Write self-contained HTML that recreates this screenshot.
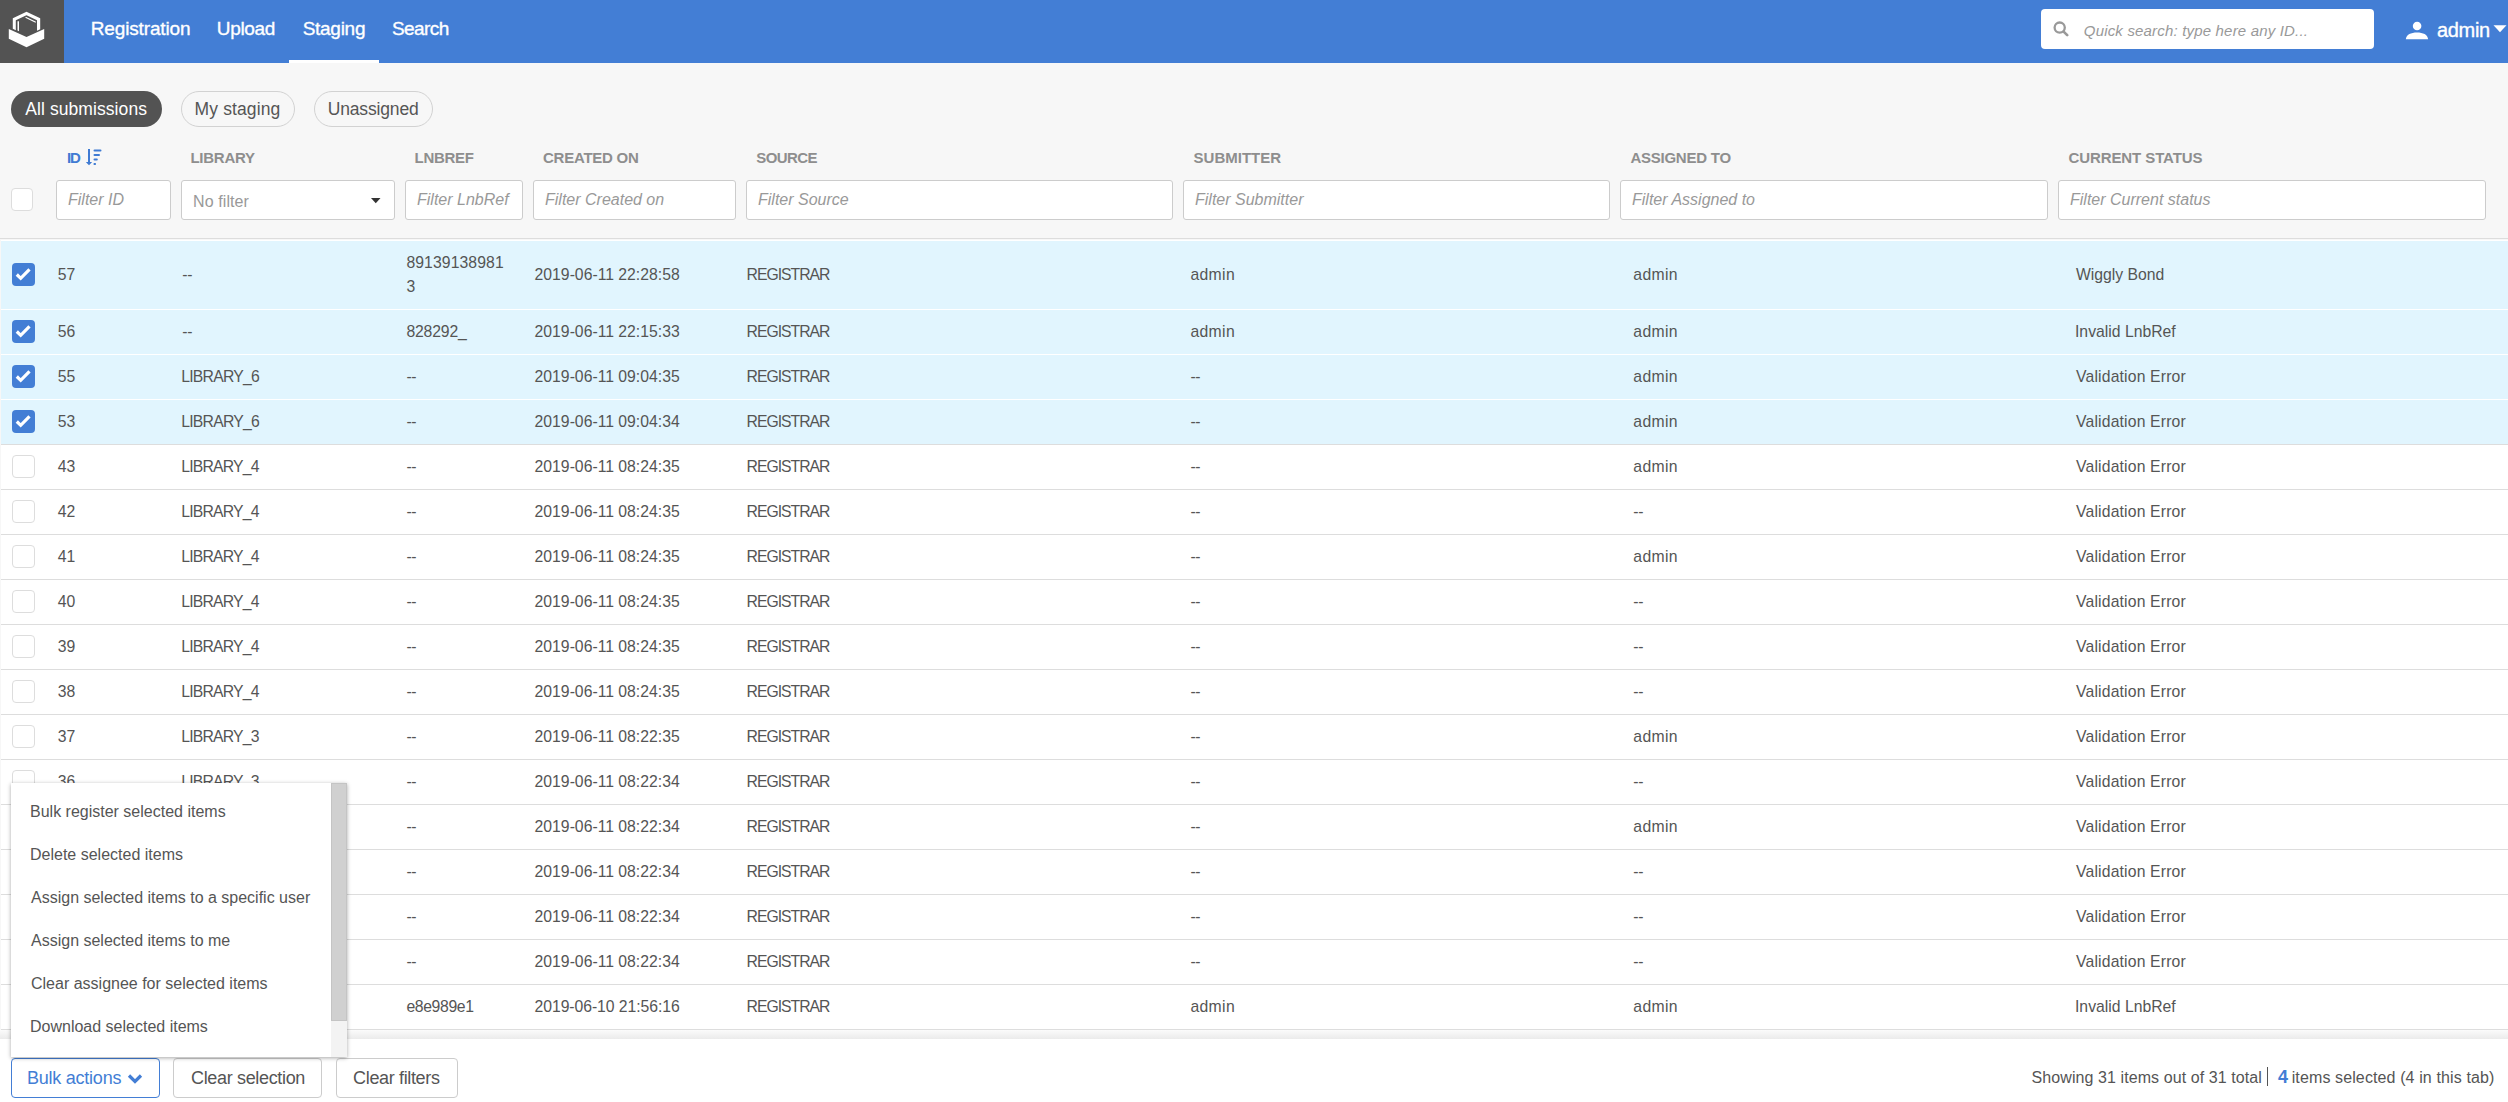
<!DOCTYPE html><html><head><meta charset="utf-8"><style>
*{box-sizing:border-box;margin:0;padding:0}
html,body{width:2508px;height:1102px;overflow:hidden;background:#f7f7f7;font-family:"Liberation Sans", sans-serif}
.t{position:absolute;white-space:nowrap}
.a{position:absolute}
</style></head><body>
<div class="a" style="left:0;top:0;width:2508px;height:63px;background:#437ed5"></div>
<div class="a" style="left:0;top:0;width:64px;height:63px;background:#535353"></div>
<svg class="a" style="left:0;top:0" width="64" height="63" viewBox="0 0 64 63">
<path d="M26.5 11.8 L40.2 18.3 L40.2 29.2 L37 30.8 L37 20.2 L26.5 15.2 L15.8 20.2 L15.8 30.2 L12.8 28.8 L12.8 18.3 Z" fill="#fff"/>
<path d="M8.8 29 L26.5 37 L44.2 29 L44.2 38.8 L26.5 47.2 L8.8 38.8 Z" fill="#fff"/>
<path d="M17.5 21.2 L19 21.2 L19 31.2 L17.5 30.5 Z" fill="#fff"/>
<path d="M25.8 16.8 L36 21.8 L35.5 22.8 L25.3 17.8 Z" fill="#fff"/>
</svg>
<div class="t" style="left:90.80px;top:19.02px;font-size:19px;line-height:19px;color:#fff;letter-spacing:-0.156px;-webkit-text-stroke:0.35px #fff;">Registration</div>
<div class="t" style="left:216.80px;top:19.02px;font-size:19px;line-height:19px;color:#fff;letter-spacing:-0.329px;-webkit-text-stroke:0.35px #fff;">Upload</div>
<div class="t" style="left:302.70px;top:19.02px;font-size:19px;line-height:19px;color:#fff;letter-spacing:-0.279px;-webkit-text-stroke:0.35px #fff;">Staging</div>
<div class="t" style="left:392.00px;top:19.02px;font-size:19px;line-height:19px;color:#fff;letter-spacing:-0.587px;-webkit-text-stroke:0.35px #fff;">Search</div>
<div class="a" style="left:289px;top:60px;width:90px;height:3px;background:#fff"></div>
<div class="a" style="left:2041px;top:9px;width:333px;height:40px;background:#fff;border-radius:4px"></div>
<svg class="a" style="left:2053px;top:21px" width="16" height="16" viewBox="0 0 16 16">
<circle cx="6.7" cy="6.6" r="5.1" fill="none" stroke="#999" stroke-width="2.3"/>
<path d="M10.6 10.6 L14.2 14.2" stroke="#999" stroke-width="2.6" stroke-linecap="round"/>
</svg>
<div class="t" style="left:2083.80px;top:23.10px;font-size:15px;line-height:15px;color:#999;letter-spacing:0.179px;font-style:italic">Quick search: type here any ID...</div>
<svg class="a" style="left:2405px;top:21px" width="24" height="20" viewBox="0 0 24 20">
<circle cx="12.1" cy="5" r="4.3" fill="#fff"/>
<path d="M0.8 18.3 C1.2 13.5 6 11.5 12 11.5 C18 11.5 22.7 13.5 23.1 18.3 Z" fill="#fff"/>
</svg>
<div class="t" style="left:2437.00px;top:19.57px;font-size:20px;line-height:20px;color:#fff;letter-spacing:-0.337px;-webkit-text-stroke:0.35px #fff;">admin</div>
<svg class="a" style="left:2492.5px;top:25px" width="14" height="8" viewBox="0 0 14 8"><path d="M0.5 0.3 L13.5 0.3 L7 7.2 Z" fill="#fff"/></svg>
<div class="a" style="left:11px;top:91px;width:151px;height:36px;border-radius:18px;background:#535353"></div>
<div class="t" style="left:25.30px;top:101.19px;font-size:17.5px;line-height:17.5px;color:#fff;letter-spacing:0.075px;">All submissions</div>
<div class="a" style="left:181px;top:91px;width:114px;height:36px;border-radius:18px;border:1px solid #d2d2d2"></div>
<div class="t" style="left:194.60px;top:101.19px;font-size:17.5px;line-height:17.5px;color:#555;letter-spacing:0.124px;">My staging</div>
<div class="a" style="left:314px;top:91px;width:119px;height:36px;border-radius:18px;border:1px solid #d2d2d2"></div>
<div class="t" style="left:327.70px;top:101.19px;font-size:17.5px;line-height:17.5px;color:#555;letter-spacing:-0.154px;">Unassigned</div>
<div class="t" style="left:66.90px;top:150.10px;font-size:15px;line-height:15px;color:#3f7bd3;letter-spacing:-1.167px;font-weight:bold">ID</div>
<div class="t" style="left:190.40px;top:150.10px;font-size:15px;line-height:15px;color:#8e8e8e;letter-spacing:-0.251px;font-weight:bold">LIBRARY</div>
<div class="t" style="left:414.60px;top:150.10px;font-size:15px;line-height:15px;color:#8e8e8e;letter-spacing:-0.313px;font-weight:bold">LNBREF</div>
<div class="t" style="left:543.00px;top:150.10px;font-size:15px;line-height:15px;color:#8e8e8e;letter-spacing:-0.247px;font-weight:bold">CREATED ON</div>
<div class="t" style="left:756.20px;top:150.10px;font-size:15px;line-height:15px;color:#8e8e8e;letter-spacing:-0.554px;font-weight:bold">SOURCE</div>
<div class="t" style="left:1193.60px;top:150.10px;font-size:15px;line-height:15px;color:#8e8e8e;letter-spacing:0.005px;font-weight:bold">SUBMITTER</div>
<div class="t" style="left:1630.40px;top:150.10px;font-size:15px;line-height:15px;color:#8e8e8e;letter-spacing:-0.241px;font-weight:bold">ASSIGNED TO</div>
<div class="t" style="left:2068.50px;top:150.10px;font-size:15px;line-height:15px;color:#8e8e8e;letter-spacing:-0.097px;font-weight:bold">CURRENT STATUS</div>
<svg class="a" style="left:84px;top:148px" width="20" height="18" viewBox="84 148 20 18">
<rect x="88" y="149" width="2" height="13.5" fill="#3f7bd3"/>
<path d="M85.8 162 L92.2 162 L89 165.2 Z" fill="#3f7bd3"/>
<rect x="93.5" y="149.5" width="8" height="2.1" rx="1" fill="#3f7bd3"/>
<rect x="93.5" y="154" width="6.5" height="2.1" rx="1" fill="#3f7bd3"/>
<rect x="93.5" y="158.5" width="4.3" height="2.1" rx="1" fill="#3f7bd3"/>
<rect x="93.5" y="163" width="2.5" height="2.1" rx="0.8" fill="#3f7bd3"/>
</svg>
<div class="a" style="left:11px;top:188px;width:22px;height:23px;border:1px solid #ddd;border-radius:4px;background:#fff"></div>
<div class="a" style="left:56px;top:180px;width:115px;height:40px;border:1px solid #ccc;border-radius:3px;background:#fff;overflow:hidden"><div class="t" style="left:11px;top:10.96px;font-size:16px;line-height:16px;color:#999;font-style:italic">Filter ID</div></div>
<div class="a" style="left:181px;top:180px;width:214px;height:40px;border:1px solid #ccc;border-radius:3px;background:#fff;overflow:hidden"><div class="t" style="left:11px;letter-spacing:0.1px;top:12.66px;font-size:16px;line-height:16px;color:#999">No filter</div><svg class="a" style="left:189px;top:17px" width="10" height="6" viewBox="0 0 10 6"><path d="M0 0 L9.5 0 L4.75 5.2 Z" fill="#333"/></svg></div>
<div class="a" style="left:405px;top:180px;width:117.5px;height:40px;border:1px solid #ccc;border-radius:3px;background:#fff;overflow:hidden"><div class="t" style="left:11px;top:10.96px;font-size:16px;line-height:16px;color:#999;font-style:italic">Filter LnbRef</div></div>
<div class="a" style="left:533px;top:180px;width:203px;height:40px;border:1px solid #ccc;border-radius:3px;background:#fff;overflow:hidden"><div class="t" style="left:11px;top:10.96px;font-size:16px;line-height:16px;color:#999;font-style:italic">Filter Created on</div></div>
<div class="a" style="left:746px;top:180px;width:427px;height:40px;border:1px solid #ccc;border-radius:3px;background:#fff;overflow:hidden"><div class="t" style="left:11px;top:10.96px;font-size:16px;line-height:16px;color:#999;font-style:italic">Filter Source</div></div>
<div class="a" style="left:1183px;top:180px;width:427px;height:40px;border:1px solid #ccc;border-radius:3px;background:#fff;overflow:hidden"><div class="t" style="left:11px;top:10.96px;font-size:16px;line-height:16px;color:#999;font-style:italic">Filter Submitter</div></div>
<div class="a" style="left:1620px;top:180px;width:428px;height:40px;border:1px solid #ccc;border-radius:3px;background:#fff;overflow:hidden"><div class="t" style="left:11px;top:10.96px;font-size:16px;line-height:16px;color:#999;font-style:italic">Filter Assigned to</div></div>
<div class="a" style="left:2058px;top:180px;width:428px;height:40px;border:1px solid #ccc;border-radius:3px;background:#fff;overflow:hidden"><div class="t" style="left:11px;top:10.96px;font-size:16px;line-height:16px;color:#999;font-style:italic">Filter Current status</div></div>
<div class="a" style="left:0;top:238px;width:2508px;height:1px;background:#ddd"></div>
<div class="a" style="left:1px;top:240px;width:2507px;height:790px;background:#fff"></div>
<div class="a" style="left:1px;top:240px;width:2507px;height:69px;border-top:1px solid #fff;background:#e1f5fe"></div>
<div class="a" style="left:12px;top:263px;width:23px;height:23px;border-radius:4px;background:#437ed5"></div><svg class="a" style="left:12px;top:263px" width="23" height="23" viewBox="0 0 23 23"><path d="M4.8 11.5 L8.7 15.3 L17.5 6.3" fill="none" stroke="#fff" stroke-width="3.2"/></svg>
<div class="t" style="left:57.80px;top:267.27px;font-size:15.75px;line-height:15.75px;color:#555;">57</div>
<div class="t" style="left:182.30px;top:267.27px;font-size:15.75px;line-height:15.75px;color:#555;letter-spacing:-0.3px;">--</div>
<div class="t" style="left:406.40px;top:255.27px;font-size:15.75px;line-height:15.75px;color:#555;letter-spacing:0.091px;">89139138981</div>
<div class="t" style="left:406.40px;top:279.27px;font-size:15.75px;line-height:15.75px;color:#555;">3</div>
<div class="t" style="left:534.60px;top:267.27px;font-size:15.75px;line-height:15.75px;color:#555;letter-spacing:-0.001px;">2019-06-11 22:28:58</div>
<div class="t" style="left:746.60px;top:267.27px;font-size:15.75px;line-height:15.75px;color:#555;letter-spacing:-1.014px;">REGISTRAR</div>
<div class="t" style="left:1190.40px;top:267.27px;font-size:15.75px;line-height:15.75px;color:#555;letter-spacing:0.341px;">admin</div>
<div class="t" style="left:1633.30px;top:267.27px;font-size:15.75px;line-height:15.75px;color:#555;letter-spacing:0.341px;">admin</div>
<div class="t" style="left:2076.00px;top:267.27px;font-size:15.75px;line-height:15.75px;color:#555;letter-spacing:-0.026px;">Wiggly Bond</div>
<div class="a" style="left:1px;top:309px;width:2507px;height:45px;border-top:1px solid #fff;background:#e1f5fe"></div>
<div class="a" style="left:12px;top:320px;width:23px;height:23px;border-radius:4px;background:#437ed5"></div><svg class="a" style="left:12px;top:320px" width="23" height="23" viewBox="0 0 23 23"><path d="M4.8 11.5 L8.7 15.3 L17.5 6.3" fill="none" stroke="#fff" stroke-width="3.2"/></svg>
<div class="t" style="left:57.80px;top:324.27px;font-size:15.75px;line-height:15.75px;color:#555;">56</div>
<div class="t" style="left:182.30px;top:324.27px;font-size:15.75px;line-height:15.75px;color:#555;letter-spacing:-0.3px;">--</div>
<div class="t" style="left:406.40px;top:324.27px;font-size:15.75px;line-height:15.75px;color:#555;letter-spacing:-0.159px;">828292_</div>
<div class="t" style="left:534.60px;top:324.27px;font-size:15.75px;line-height:15.75px;color:#555;letter-spacing:-0.001px;">2019-06-11 22:15:33</div>
<div class="t" style="left:746.60px;top:324.27px;font-size:15.75px;line-height:15.75px;color:#555;letter-spacing:-1.014px;">REGISTRAR</div>
<div class="t" style="left:1190.40px;top:324.27px;font-size:15.75px;line-height:15.75px;color:#555;letter-spacing:0.341px;">admin</div>
<div class="t" style="left:1633.30px;top:324.27px;font-size:15.75px;line-height:15.75px;color:#555;letter-spacing:0.341px;">admin</div>
<div class="t" style="left:2075.00px;top:324.27px;font-size:15.75px;line-height:15.75px;color:#555;letter-spacing:-0.001px;">Invalid LnbRef</div>
<div class="a" style="left:1px;top:354px;width:2507px;height:45px;border-top:1px solid #fff;background:#e1f5fe"></div>
<div class="a" style="left:12px;top:365px;width:23px;height:23px;border-radius:4px;background:#437ed5"></div><svg class="a" style="left:12px;top:365px" width="23" height="23" viewBox="0 0 23 23"><path d="M4.8 11.5 L8.7 15.3 L17.5 6.3" fill="none" stroke="#fff" stroke-width="3.2"/></svg>
<div class="t" style="left:57.80px;top:369.27px;font-size:15.75px;line-height:15.75px;color:#555;">55</div>
<div class="t" style="left:181.30px;top:369.27px;font-size:15.75px;line-height:15.75px;color:#555;letter-spacing:-0.784px;">LIBRARY_6</div>
<div class="t" style="left:406.40px;top:369.27px;font-size:15.75px;line-height:15.75px;color:#555;letter-spacing:-0.3px;">--</div>
<div class="t" style="left:534.60px;top:369.27px;font-size:15.75px;line-height:15.75px;color:#555;letter-spacing:-0.001px;">2019-06-11 09:04:35</div>
<div class="t" style="left:746.60px;top:369.27px;font-size:15.75px;line-height:15.75px;color:#555;letter-spacing:-1.014px;">REGISTRAR</div>
<div class="t" style="left:1190.40px;top:369.27px;font-size:15.75px;line-height:15.75px;color:#555;letter-spacing:-0.3px;">--</div>
<div class="t" style="left:1633.30px;top:369.27px;font-size:15.75px;line-height:15.75px;color:#555;letter-spacing:0.341px;">admin</div>
<div class="t" style="left:2076.00px;top:369.27px;font-size:15.75px;line-height:15.75px;color:#555;letter-spacing:0.158px;">Validation Error</div>
<div class="a" style="left:1px;top:399px;width:2507px;height:45px;border-top:1px solid #fff;background:#e1f5fe"></div>
<div class="a" style="left:12px;top:410px;width:23px;height:23px;border-radius:4px;background:#437ed5"></div><svg class="a" style="left:12px;top:410px" width="23" height="23" viewBox="0 0 23 23"><path d="M4.8 11.5 L8.7 15.3 L17.5 6.3" fill="none" stroke="#fff" stroke-width="3.2"/></svg>
<div class="t" style="left:57.80px;top:414.27px;font-size:15.75px;line-height:15.75px;color:#555;">53</div>
<div class="t" style="left:181.30px;top:414.27px;font-size:15.75px;line-height:15.75px;color:#555;letter-spacing:-0.784px;">LIBRARY_6</div>
<div class="t" style="left:406.40px;top:414.27px;font-size:15.75px;line-height:15.75px;color:#555;letter-spacing:-0.3px;">--</div>
<div class="t" style="left:534.60px;top:414.27px;font-size:15.75px;line-height:15.75px;color:#555;letter-spacing:-0.001px;">2019-06-11 09:04:34</div>
<div class="t" style="left:746.60px;top:414.27px;font-size:15.75px;line-height:15.75px;color:#555;letter-spacing:-1.014px;">REGISTRAR</div>
<div class="t" style="left:1190.40px;top:414.27px;font-size:15.75px;line-height:15.75px;color:#555;letter-spacing:-0.3px;">--</div>
<div class="t" style="left:1633.30px;top:414.27px;font-size:15.75px;line-height:15.75px;color:#555;letter-spacing:0.341px;">admin</div>
<div class="t" style="left:2076.00px;top:414.27px;font-size:15.75px;line-height:15.75px;color:#555;letter-spacing:0.158px;">Validation Error</div>
<div class="a" style="left:1px;top:444px;width:2507px;height:45px;border-top:1px solid #ddd;background:#fff"></div>
<div class="a" style="left:12px;top:455px;width:23px;height:23px;border-radius:4px;border:1px solid #ddd;background:#fff"></div>
<div class="t" style="left:57.80px;top:459.27px;font-size:15.75px;line-height:15.75px;color:#555;">43</div>
<div class="t" style="left:181.30px;top:459.27px;font-size:15.75px;line-height:15.75px;color:#555;letter-spacing:-0.809px;">LIBRARY_4</div>
<div class="t" style="left:406.40px;top:459.27px;font-size:15.75px;line-height:15.75px;color:#555;letter-spacing:-0.3px;">--</div>
<div class="t" style="left:534.60px;top:459.27px;font-size:15.75px;line-height:15.75px;color:#555;letter-spacing:-0.001px;">2019-06-11 08:24:35</div>
<div class="t" style="left:746.60px;top:459.27px;font-size:15.75px;line-height:15.75px;color:#555;letter-spacing:-1.014px;">REGISTRAR</div>
<div class="t" style="left:1190.40px;top:459.27px;font-size:15.75px;line-height:15.75px;color:#555;letter-spacing:-0.3px;">--</div>
<div class="t" style="left:1633.30px;top:459.27px;font-size:15.75px;line-height:15.75px;color:#555;letter-spacing:0.341px;">admin</div>
<div class="t" style="left:2076.00px;top:459.27px;font-size:15.75px;line-height:15.75px;color:#555;letter-spacing:0.158px;">Validation Error</div>
<div class="a" style="left:1px;top:489px;width:2507px;height:45px;border-top:1px solid #ddd;background:#fff"></div>
<div class="a" style="left:12px;top:500px;width:23px;height:23px;border-radius:4px;border:1px solid #ddd;background:#fff"></div>
<div class="t" style="left:57.80px;top:504.27px;font-size:15.75px;line-height:15.75px;color:#555;">42</div>
<div class="t" style="left:181.30px;top:504.27px;font-size:15.75px;line-height:15.75px;color:#555;letter-spacing:-0.809px;">LIBRARY_4</div>
<div class="t" style="left:406.40px;top:504.27px;font-size:15.75px;line-height:15.75px;color:#555;letter-spacing:-0.3px;">--</div>
<div class="t" style="left:534.60px;top:504.27px;font-size:15.75px;line-height:15.75px;color:#555;letter-spacing:-0.001px;">2019-06-11 08:24:35</div>
<div class="t" style="left:746.60px;top:504.27px;font-size:15.75px;line-height:15.75px;color:#555;letter-spacing:-1.014px;">REGISTRAR</div>
<div class="t" style="left:1190.40px;top:504.27px;font-size:15.75px;line-height:15.75px;color:#555;letter-spacing:-0.3px;">--</div>
<div class="t" style="left:1633.30px;top:504.27px;font-size:15.75px;line-height:15.75px;color:#555;letter-spacing:-0.3px;">--</div>
<div class="t" style="left:2076.00px;top:504.27px;font-size:15.75px;line-height:15.75px;color:#555;letter-spacing:0.158px;">Validation Error</div>
<div class="a" style="left:1px;top:534px;width:2507px;height:45px;border-top:1px solid #ddd;background:#fff"></div>
<div class="a" style="left:12px;top:545px;width:23px;height:23px;border-radius:4px;border:1px solid #ddd;background:#fff"></div>
<div class="t" style="left:57.80px;top:549.27px;font-size:15.75px;line-height:15.75px;color:#555;">41</div>
<div class="t" style="left:181.30px;top:549.27px;font-size:15.75px;line-height:15.75px;color:#555;letter-spacing:-0.809px;">LIBRARY_4</div>
<div class="t" style="left:406.40px;top:549.27px;font-size:15.75px;line-height:15.75px;color:#555;letter-spacing:-0.3px;">--</div>
<div class="t" style="left:534.60px;top:549.27px;font-size:15.75px;line-height:15.75px;color:#555;letter-spacing:-0.001px;">2019-06-11 08:24:35</div>
<div class="t" style="left:746.60px;top:549.27px;font-size:15.75px;line-height:15.75px;color:#555;letter-spacing:-1.014px;">REGISTRAR</div>
<div class="t" style="left:1190.40px;top:549.27px;font-size:15.75px;line-height:15.75px;color:#555;letter-spacing:-0.3px;">--</div>
<div class="t" style="left:1633.30px;top:549.27px;font-size:15.75px;line-height:15.75px;color:#555;letter-spacing:0.341px;">admin</div>
<div class="t" style="left:2076.00px;top:549.27px;font-size:15.75px;line-height:15.75px;color:#555;letter-spacing:0.158px;">Validation Error</div>
<div class="a" style="left:1px;top:579px;width:2507px;height:45px;border-top:1px solid #ddd;background:#fff"></div>
<div class="a" style="left:12px;top:590px;width:23px;height:23px;border-radius:4px;border:1px solid #ddd;background:#fff"></div>
<div class="t" style="left:57.80px;top:594.27px;font-size:15.75px;line-height:15.75px;color:#555;">40</div>
<div class="t" style="left:181.30px;top:594.27px;font-size:15.75px;line-height:15.75px;color:#555;letter-spacing:-0.809px;">LIBRARY_4</div>
<div class="t" style="left:406.40px;top:594.27px;font-size:15.75px;line-height:15.75px;color:#555;letter-spacing:-0.3px;">--</div>
<div class="t" style="left:534.60px;top:594.27px;font-size:15.75px;line-height:15.75px;color:#555;letter-spacing:-0.001px;">2019-06-11 08:24:35</div>
<div class="t" style="left:746.60px;top:594.27px;font-size:15.75px;line-height:15.75px;color:#555;letter-spacing:-1.014px;">REGISTRAR</div>
<div class="t" style="left:1190.40px;top:594.27px;font-size:15.75px;line-height:15.75px;color:#555;letter-spacing:-0.3px;">--</div>
<div class="t" style="left:1633.30px;top:594.27px;font-size:15.75px;line-height:15.75px;color:#555;letter-spacing:-0.3px;">--</div>
<div class="t" style="left:2076.00px;top:594.27px;font-size:15.75px;line-height:15.75px;color:#555;letter-spacing:0.158px;">Validation Error</div>
<div class="a" style="left:1px;top:624px;width:2507px;height:45px;border-top:1px solid #ddd;background:#fff"></div>
<div class="a" style="left:12px;top:635px;width:23px;height:23px;border-radius:4px;border:1px solid #ddd;background:#fff"></div>
<div class="t" style="left:57.80px;top:639.27px;font-size:15.75px;line-height:15.75px;color:#555;">39</div>
<div class="t" style="left:181.30px;top:639.27px;font-size:15.75px;line-height:15.75px;color:#555;letter-spacing:-0.809px;">LIBRARY_4</div>
<div class="t" style="left:406.40px;top:639.27px;font-size:15.75px;line-height:15.75px;color:#555;letter-spacing:-0.3px;">--</div>
<div class="t" style="left:534.60px;top:639.27px;font-size:15.75px;line-height:15.75px;color:#555;letter-spacing:-0.001px;">2019-06-11 08:24:35</div>
<div class="t" style="left:746.60px;top:639.27px;font-size:15.75px;line-height:15.75px;color:#555;letter-spacing:-1.014px;">REGISTRAR</div>
<div class="t" style="left:1190.40px;top:639.27px;font-size:15.75px;line-height:15.75px;color:#555;letter-spacing:-0.3px;">--</div>
<div class="t" style="left:1633.30px;top:639.27px;font-size:15.75px;line-height:15.75px;color:#555;letter-spacing:-0.3px;">--</div>
<div class="t" style="left:2076.00px;top:639.27px;font-size:15.75px;line-height:15.75px;color:#555;letter-spacing:0.158px;">Validation Error</div>
<div class="a" style="left:1px;top:669px;width:2507px;height:45px;border-top:1px solid #ddd;background:#fff"></div>
<div class="a" style="left:12px;top:680px;width:23px;height:23px;border-radius:4px;border:1px solid #ddd;background:#fff"></div>
<div class="t" style="left:57.80px;top:684.27px;font-size:15.75px;line-height:15.75px;color:#555;">38</div>
<div class="t" style="left:181.30px;top:684.27px;font-size:15.75px;line-height:15.75px;color:#555;letter-spacing:-0.809px;">LIBRARY_4</div>
<div class="t" style="left:406.40px;top:684.27px;font-size:15.75px;line-height:15.75px;color:#555;letter-spacing:-0.3px;">--</div>
<div class="t" style="left:534.60px;top:684.27px;font-size:15.75px;line-height:15.75px;color:#555;letter-spacing:-0.001px;">2019-06-11 08:24:35</div>
<div class="t" style="left:746.60px;top:684.27px;font-size:15.75px;line-height:15.75px;color:#555;letter-spacing:-1.014px;">REGISTRAR</div>
<div class="t" style="left:1190.40px;top:684.27px;font-size:15.75px;line-height:15.75px;color:#555;letter-spacing:-0.3px;">--</div>
<div class="t" style="left:1633.30px;top:684.27px;font-size:15.75px;line-height:15.75px;color:#555;letter-spacing:-0.3px;">--</div>
<div class="t" style="left:2076.00px;top:684.27px;font-size:15.75px;line-height:15.75px;color:#555;letter-spacing:0.158px;">Validation Error</div>
<div class="a" style="left:1px;top:714px;width:2507px;height:45px;border-top:1px solid #ddd;background:#fff"></div>
<div class="a" style="left:12px;top:725px;width:23px;height:23px;border-radius:4px;border:1px solid #ddd;background:#fff"></div>
<div class="t" style="left:57.80px;top:729.27px;font-size:15.75px;line-height:15.75px;color:#555;">37</div>
<div class="t" style="left:181.30px;top:729.27px;font-size:15.75px;line-height:15.75px;color:#555;letter-spacing:-0.809px;">LIBRARY_3</div>
<div class="t" style="left:406.40px;top:729.27px;font-size:15.75px;line-height:15.75px;color:#555;letter-spacing:-0.3px;">--</div>
<div class="t" style="left:534.60px;top:729.27px;font-size:15.75px;line-height:15.75px;color:#555;letter-spacing:-0.001px;">2019-06-11 08:22:35</div>
<div class="t" style="left:746.60px;top:729.27px;font-size:15.75px;line-height:15.75px;color:#555;letter-spacing:-1.014px;">REGISTRAR</div>
<div class="t" style="left:1190.40px;top:729.27px;font-size:15.75px;line-height:15.75px;color:#555;letter-spacing:-0.3px;">--</div>
<div class="t" style="left:1633.30px;top:729.27px;font-size:15.75px;line-height:15.75px;color:#555;letter-spacing:0.341px;">admin</div>
<div class="t" style="left:2076.00px;top:729.27px;font-size:15.75px;line-height:15.75px;color:#555;letter-spacing:0.158px;">Validation Error</div>
<div class="a" style="left:1px;top:759px;width:2507px;height:45px;border-top:1px solid #ddd;background:#fff"></div>
<div class="a" style="left:12px;top:770px;width:23px;height:23px;border-radius:4px;border:1px solid #ddd;background:#fff"></div>
<div class="t" style="left:57.80px;top:774.27px;font-size:15.75px;line-height:15.75px;color:#555;">36</div>
<div class="t" style="left:181.30px;top:774.27px;font-size:15.75px;line-height:15.75px;color:#555;letter-spacing:-0.809px;">LIBRARY_3</div>
<div class="t" style="left:406.40px;top:774.27px;font-size:15.75px;line-height:15.75px;color:#555;letter-spacing:-0.3px;">--</div>
<div class="t" style="left:534.60px;top:774.27px;font-size:15.75px;line-height:15.75px;color:#555;letter-spacing:-0.001px;">2019-06-11 08:22:34</div>
<div class="t" style="left:746.60px;top:774.27px;font-size:15.75px;line-height:15.75px;color:#555;letter-spacing:-1.014px;">REGISTRAR</div>
<div class="t" style="left:1190.40px;top:774.27px;font-size:15.75px;line-height:15.75px;color:#555;letter-spacing:-0.3px;">--</div>
<div class="t" style="left:1633.30px;top:774.27px;font-size:15.75px;line-height:15.75px;color:#555;letter-spacing:-0.3px;">--</div>
<div class="t" style="left:2076.00px;top:774.27px;font-size:15.75px;line-height:15.75px;color:#555;letter-spacing:0.158px;">Validation Error</div>
<div class="a" style="left:1px;top:804px;width:2507px;height:45px;border-top:1px solid #ddd;background:#fff"></div>
<div class="a" style="left:12px;top:815px;width:23px;height:23px;border-radius:4px;border:1px solid #ddd;background:#fff"></div>
<div class="t" style="left:57.80px;top:819.27px;font-size:15.75px;line-height:15.75px;color:#555;">35</div>
<div class="t" style="left:181.30px;top:819.27px;font-size:15.75px;line-height:15.75px;color:#555;letter-spacing:-0.809px;">LIBRARY_3</div>
<div class="t" style="left:406.40px;top:819.27px;font-size:15.75px;line-height:15.75px;color:#555;letter-spacing:-0.3px;">--</div>
<div class="t" style="left:534.60px;top:819.27px;font-size:15.75px;line-height:15.75px;color:#555;letter-spacing:-0.001px;">2019-06-11 08:22:34</div>
<div class="t" style="left:746.60px;top:819.27px;font-size:15.75px;line-height:15.75px;color:#555;letter-spacing:-1.014px;">REGISTRAR</div>
<div class="t" style="left:1190.40px;top:819.27px;font-size:15.75px;line-height:15.75px;color:#555;letter-spacing:-0.3px;">--</div>
<div class="t" style="left:1633.30px;top:819.27px;font-size:15.75px;line-height:15.75px;color:#555;letter-spacing:0.341px;">admin</div>
<div class="t" style="left:2076.00px;top:819.27px;font-size:15.75px;line-height:15.75px;color:#555;letter-spacing:0.158px;">Validation Error</div>
<div class="a" style="left:1px;top:849px;width:2507px;height:45px;border-top:1px solid #ddd;background:#fff"></div>
<div class="a" style="left:12px;top:860px;width:23px;height:23px;border-radius:4px;border:1px solid #ddd;background:#fff"></div>
<div class="t" style="left:57.80px;top:864.27px;font-size:15.75px;line-height:15.75px;color:#555;">34</div>
<div class="t" style="left:181.30px;top:864.27px;font-size:15.75px;line-height:15.75px;color:#555;letter-spacing:-0.809px;">LIBRARY_3</div>
<div class="t" style="left:406.40px;top:864.27px;font-size:15.75px;line-height:15.75px;color:#555;letter-spacing:-0.3px;">--</div>
<div class="t" style="left:534.60px;top:864.27px;font-size:15.75px;line-height:15.75px;color:#555;letter-spacing:-0.001px;">2019-06-11 08:22:34</div>
<div class="t" style="left:746.60px;top:864.27px;font-size:15.75px;line-height:15.75px;color:#555;letter-spacing:-1.014px;">REGISTRAR</div>
<div class="t" style="left:1190.40px;top:864.27px;font-size:15.75px;line-height:15.75px;color:#555;letter-spacing:-0.3px;">--</div>
<div class="t" style="left:1633.30px;top:864.27px;font-size:15.75px;line-height:15.75px;color:#555;letter-spacing:-0.3px;">--</div>
<div class="t" style="left:2076.00px;top:864.27px;font-size:15.75px;line-height:15.75px;color:#555;letter-spacing:0.158px;">Validation Error</div>
<div class="a" style="left:1px;top:894px;width:2507px;height:45px;border-top:1px solid #ddd;background:#fff"></div>
<div class="a" style="left:12px;top:905px;width:23px;height:23px;border-radius:4px;border:1px solid #ddd;background:#fff"></div>
<div class="t" style="left:57.80px;top:909.27px;font-size:15.75px;line-height:15.75px;color:#555;">33</div>
<div class="t" style="left:181.30px;top:909.27px;font-size:15.75px;line-height:15.75px;color:#555;letter-spacing:-0.809px;">LIBRARY_3</div>
<div class="t" style="left:406.40px;top:909.27px;font-size:15.75px;line-height:15.75px;color:#555;letter-spacing:-0.3px;">--</div>
<div class="t" style="left:534.60px;top:909.27px;font-size:15.75px;line-height:15.75px;color:#555;letter-spacing:-0.001px;">2019-06-11 08:22:34</div>
<div class="t" style="left:746.60px;top:909.27px;font-size:15.75px;line-height:15.75px;color:#555;letter-spacing:-1.014px;">REGISTRAR</div>
<div class="t" style="left:1190.40px;top:909.27px;font-size:15.75px;line-height:15.75px;color:#555;letter-spacing:-0.3px;">--</div>
<div class="t" style="left:1633.30px;top:909.27px;font-size:15.75px;line-height:15.75px;color:#555;letter-spacing:-0.3px;">--</div>
<div class="t" style="left:2076.00px;top:909.27px;font-size:15.75px;line-height:15.75px;color:#555;letter-spacing:0.158px;">Validation Error</div>
<div class="a" style="left:1px;top:939px;width:2507px;height:45px;border-top:1px solid #ddd;background:#fff"></div>
<div class="a" style="left:12px;top:950px;width:23px;height:23px;border-radius:4px;border:1px solid #ddd;background:#fff"></div>
<div class="t" style="left:57.80px;top:954.27px;font-size:15.75px;line-height:15.75px;color:#555;">32</div>
<div class="t" style="left:181.30px;top:954.27px;font-size:15.75px;line-height:15.75px;color:#555;letter-spacing:-0.809px;">LIBRARY_3</div>
<div class="t" style="left:406.40px;top:954.27px;font-size:15.75px;line-height:15.75px;color:#555;letter-spacing:-0.3px;">--</div>
<div class="t" style="left:534.60px;top:954.27px;font-size:15.75px;line-height:15.75px;color:#555;letter-spacing:-0.001px;">2019-06-11 08:22:34</div>
<div class="t" style="left:746.60px;top:954.27px;font-size:15.75px;line-height:15.75px;color:#555;letter-spacing:-1.014px;">REGISTRAR</div>
<div class="t" style="left:1190.40px;top:954.27px;font-size:15.75px;line-height:15.75px;color:#555;letter-spacing:-0.3px;">--</div>
<div class="t" style="left:1633.30px;top:954.27px;font-size:15.75px;line-height:15.75px;color:#555;letter-spacing:-0.3px;">--</div>
<div class="t" style="left:2076.00px;top:954.27px;font-size:15.75px;line-height:15.75px;color:#555;letter-spacing:0.158px;">Validation Error</div>
<div class="a" style="left:1px;top:984px;width:2507px;height:45px;border-top:1px solid #ddd;background:#fff"></div>
<div class="a" style="left:12px;top:995px;width:23px;height:23px;border-radius:4px;border:1px solid #ddd;background:#fff"></div>
<div class="t" style="left:57.80px;top:999.27px;font-size:15.75px;line-height:15.75px;color:#555;">31</div>
<div class="t" style="left:182.30px;top:999.27px;font-size:15.75px;line-height:15.75px;color:#555;letter-spacing:-0.3px;">--</div>
<div class="t" style="left:406.40px;top:999.27px;font-size:15.75px;line-height:15.75px;color:#555;letter-spacing:-0.359px;">e8e989e1</div>
<div class="t" style="left:534.60px;top:999.27px;font-size:15.75px;line-height:15.75px;color:#555;letter-spacing:-0.066px;">2019-06-10 21:56:16</div>
<div class="t" style="left:746.60px;top:999.27px;font-size:15.75px;line-height:15.75px;color:#555;letter-spacing:-1.014px;">REGISTRAR</div>
<div class="t" style="left:1190.40px;top:999.27px;font-size:15.75px;line-height:15.75px;color:#555;letter-spacing:0.341px;">admin</div>
<div class="t" style="left:1633.30px;top:999.27px;font-size:15.75px;line-height:15.75px;color:#555;letter-spacing:0.341px;">admin</div>
<div class="t" style="left:2075.00px;top:999.27px;font-size:15.75px;line-height:15.75px;color:#555;letter-spacing:-0.001px;">Invalid LnbRef</div>
<div class="a" style="left:1px;top:1029px;width:2507px;height:1px;background:#ddd"></div>
<div class="a" style="left:0;top:1030px;width:2508px;height:9px;background:linear-gradient(#fbfbfb,#ebebeb)"></div>
<div class="a" style="left:0;top:1039px;width:2508px;height:63px;background:#fff"></div>
<div class="a" style="left:11px;top:1058px;width:149px;height:40px;border:1px solid #437ed5;border-radius:4px;background:#fff"></div>
<div class="t" style="left:27.00px;top:1068.96px;font-size:18px;line-height:18px;color:#437ed5;letter-spacing:-0.241px;">Bulk actions</div>
<div class="a" style="left:173px;top:1058px;width:149px;height:40px;border:1px solid #ccc;border-radius:4px;background:#fff"></div>
<div class="t" style="left:191.00px;top:1068.96px;font-size:18px;line-height:18px;color:#555;letter-spacing:-0.339px;">Clear selection</div>
<div class="a" style="left:336px;top:1058px;width:122px;height:40px;border:1px solid #ccc;border-radius:4px;background:#fff"></div>
<div class="t" style="left:353.10px;top:1068.96px;font-size:18px;line-height:18px;color:#555;letter-spacing:-0.352px;">Clear filters</div>
<svg class="a" style="left:127px;top:1072px" width="16" height="14" viewBox="0 0 16 14"><path d="M2 3.5 L8 9.5 L14 3.5" fill="none" stroke="#437ed5" stroke-width="3.2"/></svg>
<div class="t" style="left:2031.60px;top:1069.96px;font-size:16px;line-height:16px;color:#555;letter-spacing:0.079px;">Showing 31 items out of 31 total</div>
<div class="a" style="left:2267px;top:1067px;width:1px;height:19px;background:#555"></div>
<div class="t" style="left:2278.00px;top:1068.26px;font-size:18px;line-height:18px;color:#437ed5;font-weight:bold">4</div>
<div class="t" style="left:2291.70px;top:1069.96px;font-size:16px;line-height:16px;color:#555;letter-spacing:0.118px;">items selected (4 in this tab)</div>
<div class="a" style="left:11px;top:783px;width:336px;height:274px;background:#fff;box-shadow:0 1px 4px rgba(0,0,0,0.35)"></div>
<div class="a" style="left:331px;top:783px;width:16px;height:274px;background:#f3f3f3"></div>
<div class="a" style="left:331px;top:783px;width:16px;height:238px;background:#d0d0d0;border:1px solid #c4c4c4"></div>
<div class="t" style="left:30.00px;top:804.46px;font-size:16px;line-height:16px;color:#555;">Bulk register selected items</div>
<div class="t" style="left:30.00px;top:847.46px;font-size:16px;line-height:16px;color:#555;">Delete selected items</div>
<div class="t" style="left:31.00px;top:890.46px;font-size:16px;line-height:16px;color:#555;">Assign selected items to a specific user</div>
<div class="t" style="left:31.00px;top:933.46px;font-size:16px;line-height:16px;color:#555;">Assign selected items to me</div>
<div class="t" style="left:31.00px;top:976.46px;font-size:16px;line-height:16px;color:#555;">Clear assignee for selected items</div>
<div class="t" style="left:30.00px;top:1019.46px;font-size:16px;line-height:16px;color:#555;">Download selected items</div>
</body></html>
